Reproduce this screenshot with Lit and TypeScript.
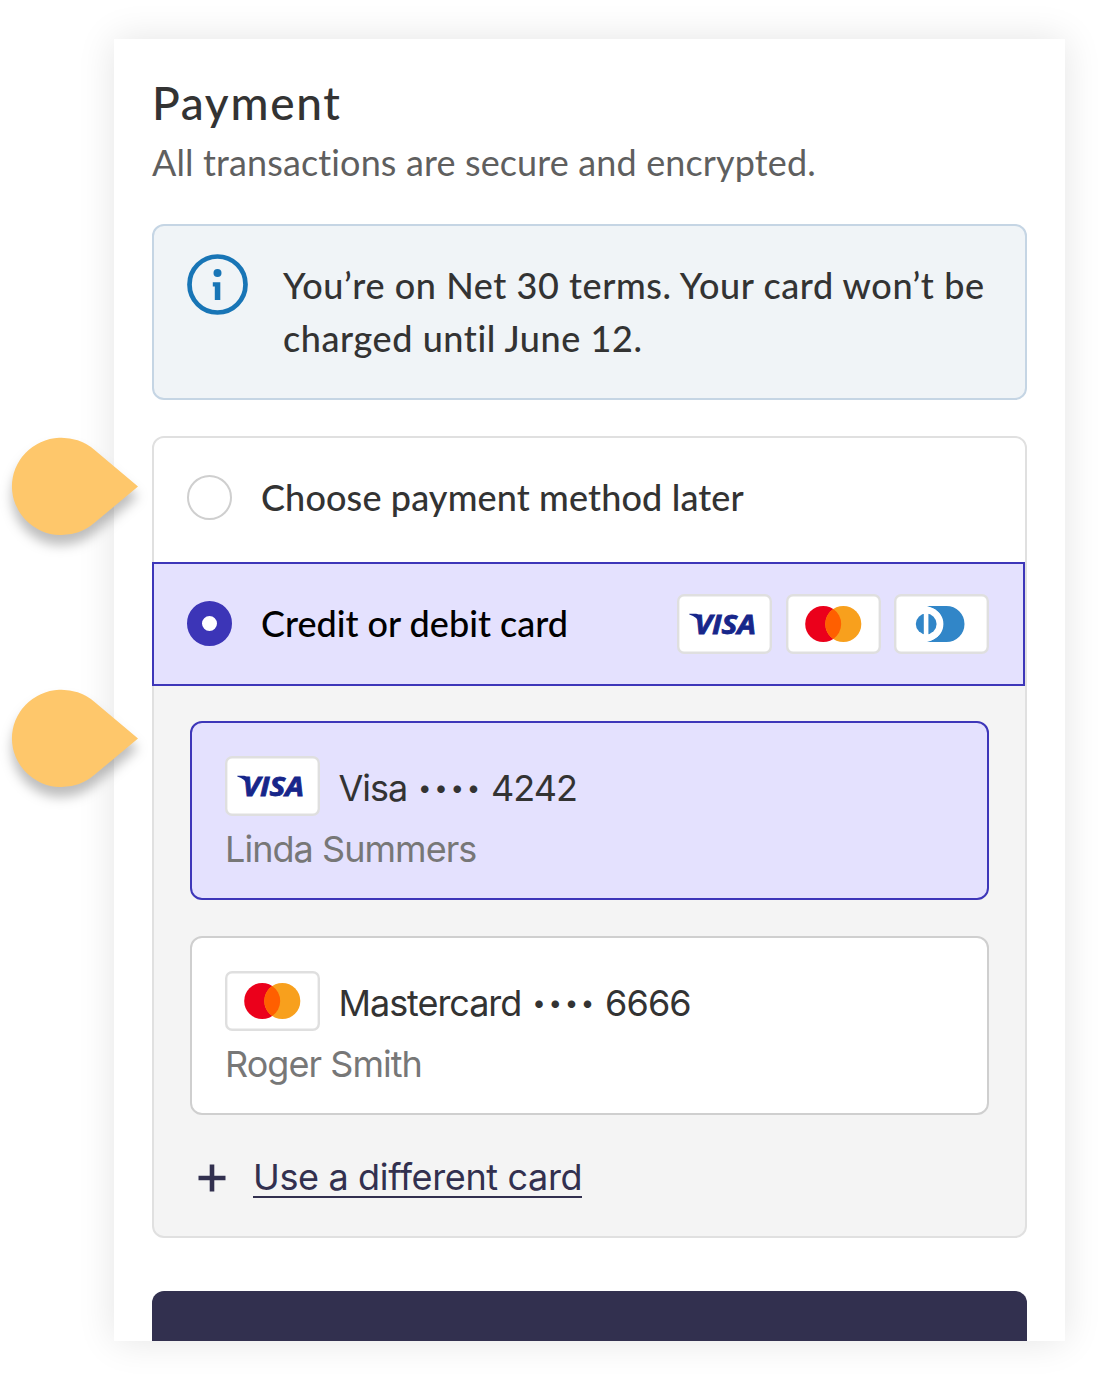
import { LitElement, html, css, svg } from "lit";
import { customElement, property } from "lit/decorators.js";
import { classMap } from "lit/directives/class-map.js";

@customElement("card-brand")
class CardBrand extends LitElement {
  @property() brand = "visa";

  static styles = css`
    :host { display: block; width: 95px; height: 60px; flex: none; }
    svg { display: block; width: 95px; height: 60px; }
    .frame { fill: #fff; stroke: #dfdfdf; stroke-width: 2.4; }
    .word { font: italic 700 27px "Open Sans", "Liberation Sans", sans-serif; fill: #17268a; stroke: #17268a; stroke-width: 0.8; }
    .navy { fill: #17268a; }
    .red { fill: #eb001b; }
    .amber { fill: #f8a01d; }
    .orange { fill: #ff5f00; }
    .blue { fill: #3186c8; }
    .white { fill: #fff; }
  `;

  private mark() {
    if (this.brand === "visa") {
      return svg`
        <path class="navy" d="M12.3 20.4V19.8H19.4Q21.4 19.8 22 22.3L23.6 30.4Q20.4 22.6 12.3 20.4Z"/>
        <text class="word" x="17.4" y="39.6" textLength="61.6" lengthAdjust="spacingAndGlyphs">VISA</text>`;
    }
    if (this.brand === "mastercard") {
      return svg`
        <circle class="red" cx="37.2" cy="30" r="18"/>
        <circle class="amber" cx="57.3" cy="30" r="18"/>
        <path class="orange" d="M47.25 15.07a18 18 0 0 1 0 29.86a18 18 0 0 1 0-29.86z"/>`;
    }
    return svg`
      <path class="blue" d="M33 12H52.5a18 18 0 0 1 0 36H33Q49.4 43 49.4 30T33 12Z"/>
      <circle class="white" cx="31.8" cy="30" r="17.2"/>
      <circle class="blue" cx="32.2" cy="30" r="10.4"/>
      <rect class="white" x="29.8" y="18" width="4.6" height="24"/>`;
  }

  render() {
    return html`<svg viewBox="0 0 95 60">
      <rect class="frame" x="1.2" y="1.2" width="92.6" height="57.6" rx="6"/>
      ${this.mark()}
    </svg>`;
  }
}

@customElement("saved-card")
class SavedCard extends LitElement {
  @property() brand = "visa";
  @property() label = "";
  @property() digits = "";
  @property() holder = "";
  @property({ type: Boolean }) selected = false;

  static styles = css`
    :host { display: block; }
    .card {
      box-sizing: border-box; height: 179px; padding: 33px 33px 0; border: 2.5px solid #cfcfcf;
      border-radius: 12px; background: #fff; font: 400 36px/44px Inter, "Liberation Sans", sans-serif;
    }
    .selected { border-color: #3d36b9; background: #e4e1fe; }
    .top { display: flex; align-items: center; height: 60px; }
    .text { display: flex; align-items: center; margin-left: 18.5px; padding-top: 4px; color: #333; white-space: pre; }
    .label { letter-spacing: -1.05px; }
    .dots { font-size: 24px; letter-spacing: 2.7px; margin: 0 8px 0 11px; }
    .digits { letter-spacing: -0.9px; }
    .holder { display: inline-block; margin-top: 11px; color: #777; letter-spacing: -0.95px; }
  `;

  render() {
    return html`<div class=${classMap({ card: true, selected: this.selected })}>
      <div class="top">
        <card-brand brand=${this.brand}></card-brand>
        <div class="text"><span class="label">${this.label}</span><span class="dots">••••</span><span class="digits">${this.digits}</span></div>
      </div>
      <span class="holder">${this.holder}</span>
    </div>`;
  }
}

@customElement("app-root")
class AppRoot extends LitElement {
  static styles = css`
    :host { display: block; position: relative; width: 1104px; height: 1380px; overflow: hidden; background: #fff; font-family: Lato, "Open Sans", sans-serif; color: #333; font-variant-ligatures: none; }
    .panel { box-sizing: border-box; width: 951px; height: 1302px; margin: 39px 0 0 114px; box-shadow: 0 0 36px rgba(0,0,0,.11); display: flow-root; }
    .inner { box-sizing: border-box; height: 1302px; padding: 36px 38px 0; overflow: hidden; background: #fff; }
    h1 { margin: 0; font-size: 46px; line-height: 56px; font-weight: 500; letter-spacing: 1.7px; }
    .sub { margin: 9px 0 0; font-size: 36px; line-height: 44px; color: #5f5f5f; letter-spacing: 0.13px; }
    .alert { box-sizing: border-box; height: 176px; margin-top: 40px; padding: 28px 33px; display: flex; gap: 35px; border: 2.5px solid #c5d5e4; border-radius: 12px; background: #f0f4f7; }
    .alert svg { width: 61px; height: 61px; flex: none; }
    .alert p { margin: 5px 0 0; font-size: 36px; line-height: 53px; font-weight: 500; letter-spacing: 0.57px; white-space: nowrap; }
    .methods { box-sizing: border-box; height: 802px; margin-top: 36px; border: 2.5px solid #e0e0e0; border-radius: 12px; background: #f4f4f4; }
    .option { box-sizing: border-box; display: flex; align-items: center; font-size: 36px; line-height: 43px; font-weight: 500; }
    .later { height: 124px; padding: 0 33px 5px; background: #fff; border-radius: 10px 10px 0 0; letter-spacing: 0.13px; }
    .radio { box-sizing: border-box; width: 45px; height: 45px; border: 2.5px solid #cfcfcf; border-radius: 50%; margin-right: 29px; }
    .on { border: 15px solid #3c35b7; background: #fff; }
    .credit { height: 124px; margin: 0 0 0 -2px; padding: 0 34px 1px 33px; border: 2.5px solid #3d36b9; background: #e4e1fe; color: #000; }
    .brands { display: flex; gap: 13.5px; margin-left: auto; }
    .cards { display: flex; flex-direction: column; gap: 36px; padding: 35px 36px 0; }
    .other { display: flex; align-items: center; gap: 27px; padding: 42px 0 0 44px; color: #32304f; font: 400 36px/44px Inter, sans-serif; font-variant-ligatures: none; letter-spacing: -0.36px; }
    .other svg { width: 28px; height: 28px; }
    .link { border-bottom: 2.5px solid #32304f; line-height: 40px; height: 39px; }
    .pay { display: block; width: 100%; height: 100px; margin-top: 53px; border: 0; border-radius: 12px; background: #32304f; }
    .pin { position: absolute; left: 0; width: 170px; height: 150px; filter: drop-shadow(0 10px 6px rgba(0,0,0,.26)); }
    .first { top: 420px; }
    .second { top: 672px; }
  `;

  private pin(cls: string) {
    return html`<svg class=${"pin " + cls} viewBox="0 0 170 150">
      <path fill="#fec76b" d="M138 66.6L94.5 102.8A49.6 48.7 0 1 1 94 29.6Z"/>
    </svg>`;
  }

  render() {
    return html`
      <div class="panel"><div class="inner">
        <h1>Payment</h1>
        <p class="sub">All transactions are secure and encrypted.</p>
        <div class="alert">
          <svg viewBox="0 0 61 61">
            <circle cx="30.5" cy="30.5" r="28" fill="none" stroke="#1875b6" stroke-width="4.7"/>
            <circle cx="30.5" cy="19" r="4" fill="#1875b6"/>
            <path d="M25.8 28.2H33.3V46H27.8V32.4H25.8Z" fill="#1875b6"/>
          </svg>
          <p>You’re on Net 30 terms. Your card won’t be<br>charged until June 12.</p>
        </div>
        <div class="methods">
          <div class="option later"><span class="radio"></span><span>Choose payment method later</span></div>
          <div class="option credit"><span class="radio on"></span><span>Credit or debit card</span>
            <div class="brands"><card-brand brand="visa"></card-brand><card-brand brand="mastercard"></card-brand><card-brand brand="diners"></card-brand></div>
          </div>
          <div class="cards">
            <saved-card brand="visa" label="Visa" digits="4242" holder="Linda Summers" selected></saved-card>
            <saved-card brand="mastercard" label="Mastercard" digits="6666" holder="Roger Smith"></saved-card>
          </div>
          <div class="other">
            <svg viewBox="0 0 28 28"><path d="M14 0.5V27.5M0.5 14H27.5" stroke="#32304f" stroke-width="4.6"/></svg>
            <span class="link">Use a different card</span>
          </div>
        </div>
        <button class="pay"></button>
      </div></div>
      ${this.pin("first")}${this.pin("second")}
    `;
  }
}
